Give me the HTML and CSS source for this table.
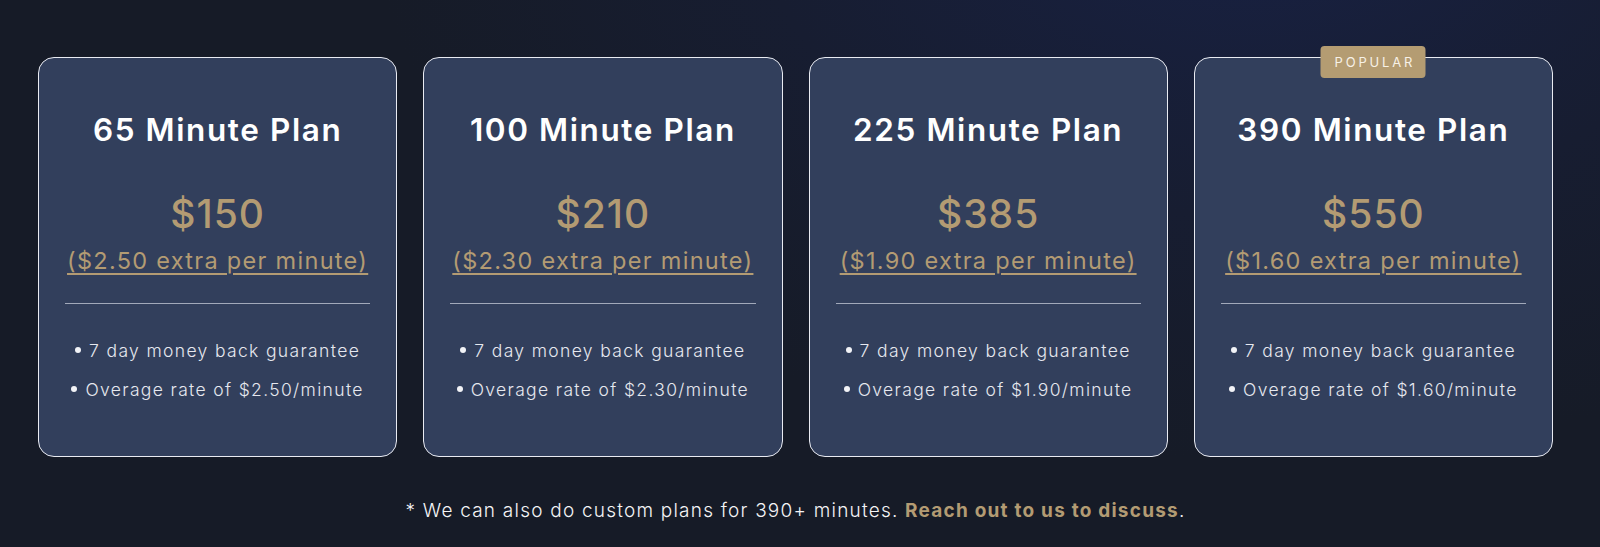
FILE: index.html
```html
<!DOCTYPE html>
<html lang="en">
<head>
<meta charset="utf-8">
<title>Plans</title>
<link rel="stylesheet" href="styles.css">
</head>
<body>
<main class="page">
  <section class="plans">
    <article class="card">
      <h2 class="title">65 Minute Plan</h2>
      <div class="price">$150</div>
      <a class="extra" href="#">($2.50 extra per minute)</a>
      <hr class="divider">
      <ul class="features">
        <li>7 day money back guarantee</li>
        <li>Overage rate of $2.50/minute</li>
      </ul>
    </article>
    <article class="card">
      <h2 class="title">100 Minute Plan</h2>
      <div class="price">$210</div>
      <a class="extra" href="#">($2.30 extra per minute)</a>
      <hr class="divider">
      <ul class="features">
        <li>7 day money back guarantee</li>
        <li>Overage rate of $2.30/minute</li>
      </ul>
    </article>
    <article class="card">
      <h2 class="title">225 Minute Plan</h2>
      <div class="price">$385</div>
      <a class="extra" href="#">($1.90 extra per minute)</a>
      <hr class="divider">
      <ul class="features">
        <li>7 day money back guarantee</li>
        <li>Overage rate of $1.90/minute</li>
      </ul>
    </article>
    <article class="card card-popular">
      <span class="badge">POPULAR</span>
      <h2 class="title">390 Minute Plan</h2>
      <div class="price">$550</div>
      <a class="extra" href="#">($1.60 extra per minute)</a>
      <hr class="divider">
      <ul class="features">
        <li>7 day money back guarantee</li>
        <li>Overage rate of $1.60/minute</li>
      </ul>
    </article>
  </section>
  <p class="note">* We can also do custom plans for 390+ minutes. <strong class="reach">Reach out to us to discuss</strong>.</p>
</main>
</body>
</html>
```

FILE: styles.css
```css
* { box-sizing: border-box; }
html, body { margin: 0; padding: 0; }
body {
  width: 1600px;
  height: 547px;
  overflow: hidden;
  font-family: "Inter", "Open Sans", sans-serif;
  color: #fff;
  background: radial-gradient(ellipse 1100px 700px at 1250px -100px, #182143 0%, #171d31 45%, #161b27 80%);
  background-color: #161b27;
}
.page {
  width: 1515px;
  margin-left: 38px;
  padding-top: 57px;
}
.plans {
  display: grid;
  grid-template-columns: repeat(4, 1fr);
  column-gap: 26px;
}
.card {
  position: relative;
  height: 400px;
  background: #323f5c;
  border: 1.5px solid #e9ebf2;
  border-radius: 16px;
  padding: 52px 26px 0;
  display: flex;
  flex-direction: column;
  align-items: center;
}
.badge {
  position: absolute;
  top: -12px;
  left: 50%;
  transform: translateX(-50%);
  width: 105px;
  height: 32px;
  background: #b49c72;
  border-radius: 4px;
  color: #f7f1e6;
  font-size: 13px;
  letter-spacing: 2.8px;
  display: flex;
  align-items: center;
  justify-content: center;
  padding-left: 3px;
}
.title {
  margin: 0;
  font-size: 31.5px;
  font-weight: 600;
  line-height: 40px;
  letter-spacing: 1.6px;
}
.title, .price, .extra, .features li {
  white-space: nowrap;
}
.price {
  margin-top: 42px;
  font-size: 39px;
  font-weight: 500;
  line-height: 44px;
  color: #b39b73;
  letter-spacing: 1px;
}
.extra {
  margin-top: 9px;
  font-size: 23.5px;
  font-weight: 400;
  line-height: 32px;
  color: #b39b73;
  letter-spacing: 1.3px;
  text-decoration: underline;
  text-decoration-thickness: 1.5px;
  text-underline-offset: 4px;
}
.divider {
  align-self: stretch;
  margin: 26px 0 0;
  border: 0;
  border-top: 1px solid #a2a9ba;
}
.features {
  list-style: none;
  margin: 27px 0 0;
  padding: 0;
  font-size: 17.5px;
  font-weight: 300;
  letter-spacing: 1.35px;
  color: #e6e8ef;
  line-height: 39px;
  text-align: center;
}
.features li::before {
  content: "";
  display: inline-block;
  width: 6px;
  height: 6px;
  border-radius: 50%;
  background: #f2f3f7;
  margin-right: 8px;
  vertical-align: middle;
  position: relative;
  top: -2px;
}
.note {
  margin: 42px 0 0;
  text-align: center;
  font-size: 19px;
  font-weight: 300;
  letter-spacing: 1.22px;
  color: #f4f4f6;
}
.reach {
  font-weight: 700;
  color: #b39b73;
}
```
